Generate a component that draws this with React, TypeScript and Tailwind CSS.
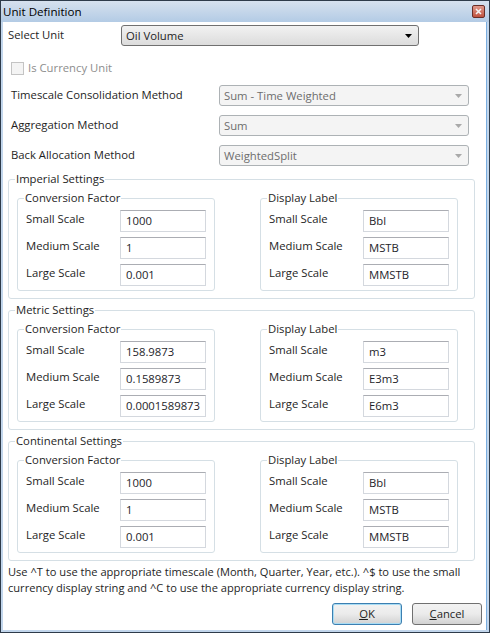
import { ReactNode } from "react";

const FONT = "font-['Open_Sans','Noto_Sans',sans-serif]";

function ComboBox({ value, disabled, className }: { value: string; disabled?: boolean; className?: string }) {
  return (
    <div
      className={`flex h-[21px] items-center justify-between rounded-[3px] border pl-[4px] pr-[6px] ${
        disabled
          ? "border-[#adb2b5] bg-[#f4f4f4] text-[#6d6d6d]"
          : "border-[#707070] bg-gradient-to-b from-[#f2f2f2] to-[#dcdcdc] text-[#1e1e1e]"
      } ${className ?? ""}`}
    >
      <span>{value}</span>
      <svg width="7" height="4" viewBox="0 0 7 4">
        <path d="M0 0h7L3.5 4z" fill={disabled ? "#a9a9a9" : "#000"} />
      </svg>
    </div>
  );
}

function TextBox({ value }: { value: string }) {
  return (
    <div className="flex h-[22px] w-[86px] items-center border border-[#d4d8de] border-t-[#abadb3] bg-white pl-[5px] text-[#1e1e2a]">
      {value}
    </div>
  );
}

function Group({ title, children, className }: { title: string; children: ReactNode; className?: string }) {
  return (
    <fieldset className={`rounded-[3px] border border-[#d5dfe5] ${className ?? ""}`}>
      <legend className="ml-[-2px] h-[16px] px-[1px] leading-[16px]">{title}</legend>
      {children}
    </fieldset>
  );
}

function ScaleBox({ title, values }: { title: string; values: string[] }) {
  const labels = ["Small Scale", "Medium Scale", "Large Scale"];
  return (
    <Group title={title} className="w-[198px] px-[8px] pb-[4px]">
      <div className="mt-[4px] flex flex-col gap-[5px]">
        {labels.map((l, i) => (
          <div key={l} className="flex items-center">
            <span className="w-[94px] -translate-y-[2px]">{l}</span>
            <TextBox value={values[i]} />
          </div>
        ))}
      </div>
    </Group>
  );
}

function SettingsGroup({ title, factors, labels }: { title: string; factors: string[]; labels: string[] }) {
  return (
    <Group title={title} className="ml-[5px] w-[467px] pl-[8px] pb-[7px]">
      <div className="mt-[3px] flex gap-[45px]">
        <ScaleBox title="Conversion Factor" values={factors} />
        <ScaleBox title="Display Label" values={labels} />
      </div>
    </Group>
  );
}

function WinButton({ children, isDefault }: { children: ReactNode; isDefault?: boolean }) {
  return (
    <div
      className={`flex h-[22px] w-[70px] items-center justify-center rounded-[3px] border bg-gradient-to-b from-[#f2f2f2] via-[#ebebeb] to-[#d2d2d2] ${
        isDefault ? "border-[#3c7fb1] shadow-[inset_0_0_0_1px_#a8dcf4]" : "border-[#707070]"
      }`}
    >
      {children}
    </div>
  );
}

export default function App() {
  return (
    <div className={`${FONT} flex h-[633px] w-[490px] flex-col border border-[#2e3b4a] bg-[#c2d6ec] text-[11.3px] leading-[16px] text-[#1e1e1e]`}>
      <div className="flex h-[21px] items-center justify-between bg-gradient-to-b from-[#d6e1ee] to-[#b3cbe5] pl-[2px] pr-[3px] text-[11.6px]">
        <span className="text-[#000]">Unit Definition</span>
        <div className="mr-[1px] flex h-[13px] w-[13px] items-center justify-center rounded-[2px] border border-[#6a2e27] bg-gradient-to-b from-[#e0998c] to-[#c0523f]">
          <svg width="7" height="7" viewBox="0 0 7 7">
            <path d="M1 1l5 5M6 1L1 6" stroke="#f4f4f4" strokeWidth="1.6" />
          </svg>
        </div>
      </div>

      <div className="mb-[2px] ml-[2px] mr-[2px] flex flex-1 flex-col border-r border-[#7aaee0] bg-white">
        <div className="mt-[3px] flex items-center pl-[5px]">
          <span className="w-[113px] -translate-y-[1px]">Select Unit</span>
          <ComboBox value="Oil Volume" className="w-[298px]" />
        </div>

        <div className="ml-[8px] mt-[14px] flex items-center gap-[4px] text-[#8d8d8d]">
          <div className="h-[13px] w-[13px] border border-[#c4c4c4] bg-[#f4f4f4]" />
          <span>Is Currency Unit</span>
        </div>

        <div className="mt-[9px] flex flex-col gap-[9px]">
          {[
            ["Timescale Consolidation Method", "Sum - Time Weighted"],
            ["Aggregation Method", "Sum"],
            ["Back Allocation Method", "WeightedSplit"],
          ].map(([label, value]) => (
            <div key={label} className="flex items-center pl-[8px]">
              <span className="w-[208px] -translate-y-[1px]">{label}</span>
              <ComboBox value={value} disabled className="w-[250px]" />
            </div>
          ))}
        </div>

        <div className="mt-[5px] flex flex-col gap-[3px]">
          <SettingsGroup title="Imperial Settings" factors={["1000", "1", "0.001"]} labels={["Bbl", "MSTB", "MMSTB"]} />
          <SettingsGroup
            title="Metric Settings"
            factors={["158.9873", "0.1589873", "0.0001589873"]}
            labels={["m3", "E3m3", "E6m3"]}
          />
          <SettingsGroup title="Continental Settings" factors={["1000", "1", "0.001"]} labels={["Bbl", "MSTB", "MMSTB"]} />
        </div>

        <p className="ml-[5px] mt-[3px] whitespace-nowrap text-[11.1px]">
          Use ^T to use the appropriate timescale (Month, Quarter, Year, etc.). ^$ to use the small
          <br />
          currency display string and ^C to use the appropriate currency display string.
        </p>

        <div className="mr-[4px] mt-[7px] flex justify-end gap-[10px]">
          <WinButton isDefault>
            <span>
              <u>O</u>K
            </span>
          </WinButton>
          <WinButton>
            <span>
              <u>C</u>ancel
            </span>
          </WinButton>
        </div>
      </div>
    </div>
  );
}
